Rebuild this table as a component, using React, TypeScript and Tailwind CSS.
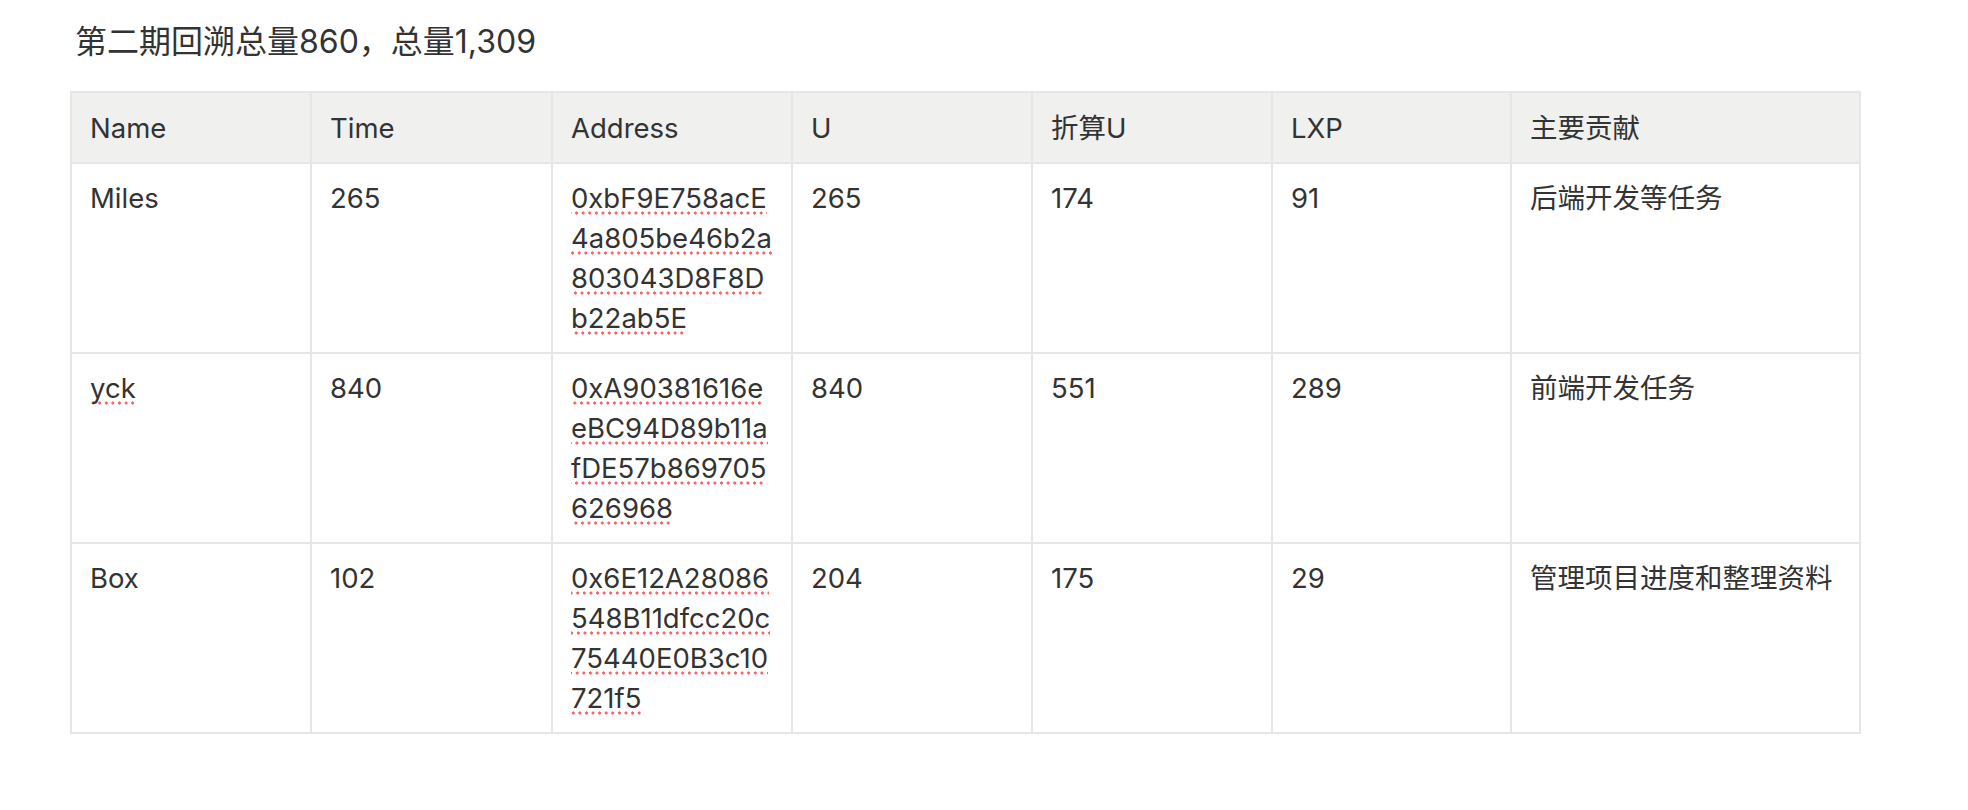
const rows = [
  {
    name: "Miles",
    nameFlag: false,
    time: "265",
    address: ["0xbF9E758acE", "4a805be46b2a", "803043D8F8D", "b22ab5E"],
    u: "265",
    converted: "174",
    lxp: "91",
    work: "后端开发等任务",
  },
  {
    name: "yck",
    nameFlag: true,
    time: "840",
    address: ["0xA90381616e", "eBC94D89b11a", "fDE57b869705", "626968"],
    u: "840",
    converted: "551",
    lxp: "289",
    work: "前端开发任务",
  },
  {
    name: "Box",
    nameFlag: false,
    time: "102",
    address: ["0x6E12A28086", "548B11dfcc20c", "75440E0B3c10", "721f5"],
    u: "204",
    converted: "175",
    lxp: "29",
    work: "管理项目进度和整理资料",
  },
];

const headers = ["Name", "Time", "Address", "U", "折算U", "LXP", "主要贡献"];

// red dotted line under the text, the spellcheck mark in the original
const flagged =
  "bg-[radial-gradient(circle,#ff6262_1.4px,transparent_1.8px)] bg-[length:6.6px_4px] bg-repeat-x bg-bottom";

export default function App() {
  return (
    <div className="min-h-screen w-full bg-white text-[#333] font-['Inter','Noto_Sans_CJK_SC',sans-serif]">
      <div className="pl-[75px] pt-[18px]">
        <h2 className="text-[32px] leading-[48px] font-normal">第二期回溯总量860，总量1,309</h2>
      </div>

      <div className="pl-[70px] pt-[25px]">
        <table className="table-fixed border-collapse w-[1789px] text-[27.5px] leading-[40px]">
          <colgroup>
            <col className="w-[240px]" />
            <col className="w-[241px]" />
            <col className="w-[240px]" />
            <col className="w-[240px]" />
            <col className="w-[240px]" />
            <col className="w-[239px]" />
            <col className="w-[349px]" />
          </colgroup>
          <thead>
            <tr className="bg-[#f0f0ef]">
              {headers.map((h) => (
                <th key={h} className="border-2 border-[#e6e6e6] px-[18px] py-[14.5px] text-left font-normal align-top">
                  {h}
                </th>
              ))}
            </tr>
          </thead>
          <tbody>
            {rows.map((r) => (
              <tr key={r.name}>
                <Cell>
                  <span className={r.nameFlag ? flagged : ""}>{r.name}</span>
                </Cell>
                <Cell>{r.time}</Cell>
                <Cell>
                  {r.address.map((line) => (
                    <div key={line}>
                      <span className={flagged}>{line}</span>
                    </div>
                  ))}
                </Cell>
                <Cell>{r.u}</Cell>
                <Cell>{r.converted}</Cell>
                <Cell>{r.lxp}</Cell>
                <Cell>{r.work}</Cell>
              </tr>
            ))}
          </tbody>
        </table>
      </div>
    </div>
  );
}

function Cell({ children }: { children: React.ReactNode }) {
  return (
    <td className="border-2 border-[#e6e6e6] px-[18px] py-[14px] align-top whitespace-nowrap">
      {children}
    </td>
  );
}
